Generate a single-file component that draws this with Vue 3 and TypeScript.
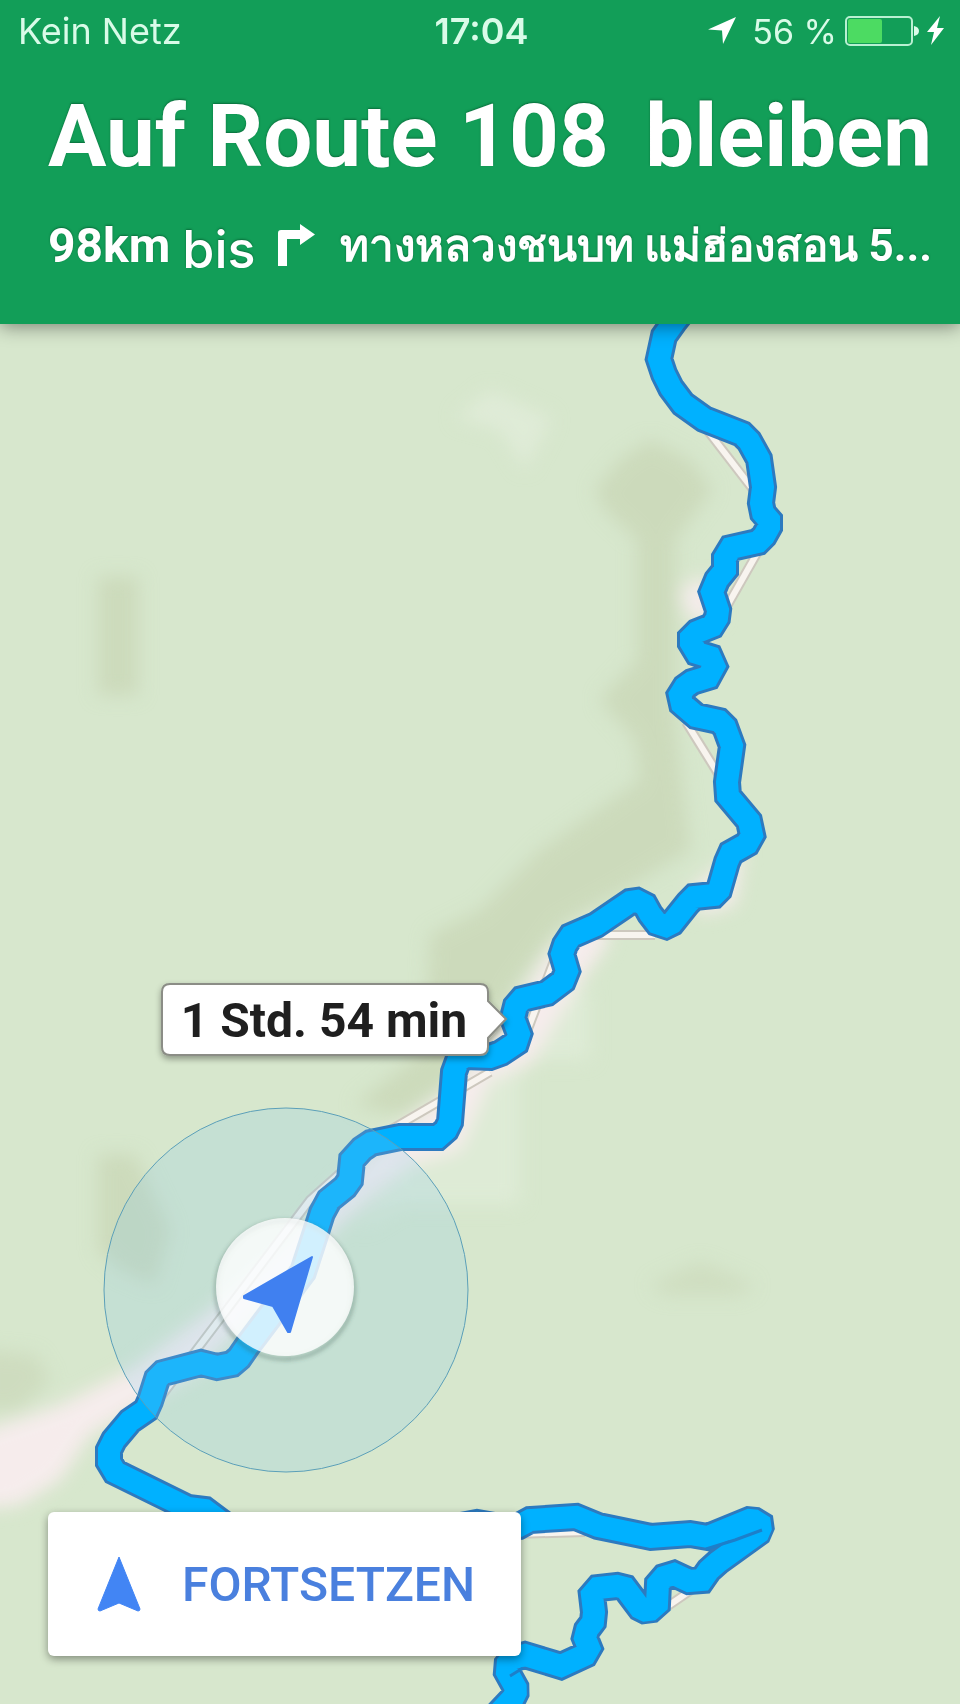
<script setup lang="ts">
interface Point {
  x: number
  y: number
}

const status = { carrier: 'Kein Netz', time: '17:04', battery: 56 }
const batteryFill = Math.round(status.battery * 0.61)

const parse = (source: string): Point[] =>
  source.split(' ').map((pair) => {
    const [x, y] = pair.split(',').map(Number)
    return { x, y }
  })

const toPath = (points: Point[]): string =>
  points.map((p, i) => `${i === 0 ? 'M' : 'L'}${p.x} ${p.y}`).join(' ')

const routePath = toPath(
  parse(
    '690,302 674,322 664,336 659,359 664,374 671,388 683,404 704,419 742,434 749,441 759,459 763,487 761,503 763,513 769,520 769,527 764,536 758,542 731,548 725,558 725,570 717,580 712,592 718,610 717,618 712,626 697,632 691,638 691,643 697,653 710,657 714,666 708,677 692,682 685,687 680,695 682,704 696,716 719,721 725,727 732,746 727,782 728,796 749,821 752,835 747,844 731,853 727,862 719,890 714,895 694,897 688,903 672,923 666,926 657,923 650,914 645,905 637,901 630,902 596,925 571,936 565,945 562,954 567,971 563,981 547,993 522,999 516,1006 513,1018 519,1034 516,1043 501,1053 490,1057 465,1056 458,1061 454,1072 450,1122 446,1130 438,1137 400,1137 371,1143 362,1149 352,1160 350,1180 345,1187 329,1200 322,1213 315,1235 303,1272 285,1296 248,1345 239,1358 232,1364 217,1367 201,1363 163,1373 157,1379 150,1401 146,1410 130,1421 114,1440 109,1450 109,1462 115,1472 188,1508 205,1510 225,1525 300,1550 440,1530 477,1523 500,1527 519,1526 530,1520 576,1517 598,1526 651,1537 690,1534 708,1537 752,1519 760,1524 761,1531 718,1562 709,1570 702,1580 689,1581 674,1574 664,1577 658,1584 657,1604 648,1612 640,1608 625,1588 617,1586 598,1588 592,1595 594,1612 593,1622 587,1630 585,1638 589,1648 585,1655 561,1666 525,1655 508,1660 507,1672 517,1690 513,1698 498,1714'
  )
)

const roads = [
  'M704 426 L758 496',
  'M760 548 L722 615',
  'M686 722 L722 780',
  'M590 935 L655 935',
  'M560 945 L520 1050',
  'M490 1072 L385 1133',
  'M385 1133 L310 1200 L160 1398',
  'M515 1534 L585 1532',
  'M668 1606 L700 1584',
]
</script>

<template>
  <main class="screen">
    <header class="header">
      <div class="status">
        <span class="carrier">{{ status.carrier }}</span>
        <time class="clock">{{ status.time }}</time>
        <div class="power">
          <svg class="location" viewBox="0 0 28 28" aria-hidden="true">
            <path d="M0 12.500 L28 0 L15 27 L14 13.500 Z" fill="#fff" />
          </svg>
          <span>{{ status.battery }} %</span>
          <svg class="battery" viewBox="0 0 100 30" aria-hidden="true">
            <rect x="1" y="1" width="66" height="28" rx="4" fill="none" stroke="#b9f0d2" stroke-width="2" />
            <rect x="3" y="3" :width="batteryFill" height="24" rx="2" fill="#4cdb62" />
            <path d="M69 10 Q74 11 74 15 Q74 19 69 20 Z" fill="#d9fbe8" />
            <path d="M95 0 L82 16 L89 16 L86 29 L99 12 L92 12 Z" fill="#fff" />
          </svg>
        </div>
      </div>
      <h1 class="title"><span>Auf Route 108</span><span>bleiben</span></h1>
      <div class="next">
        <strong>98km</strong>
        <span class="until">bis</span>
        <svg class="turn" viewBox="0 0 38 44" aria-label="Rechts abbiegen" role="img">
          <path d="M0 42 V9 Q0 6 3 6 H22 V0 L37 10.500 L22 21 V15 H9 V42 Z" fill="#fff" />
        </svg>
        <strong class="street"><span lang="th">ทางหลวงชนบท แม่ฮ่องสอน</span><span>5...</span></strong>
      </div>
    </header>

    <section class="map" aria-label="Karte">
      <svg class="canvas" viewBox="0 324 960 1380" preserveAspectRatio="xMidYMin slice">
        <defs>
          <filter id="soft" x="-30%" y="-30%" width="160%" height="160%">
            <feGaussianBlur stdDeviation="9" />
          </filter>
          <filter id="shade" x="-20%" y="-20%" width="140%" height="150%">
            <feDropShadow dx="0" dy="3" stdDeviation="3" flood-color="#000" flood-opacity="0.35" />
          </filter>
          <filter id="ring" x="-20%" y="-20%" width="140%" height="140%">
            <feGaussianBlur stdDeviation="2" />
          </filter>
        </defs>
        <rect y="324" width="960" height="1380" fill="#d7e7cd" />

        <g filter="url(#soft)">
          <g fill="#ccdabb">
            <path d="M595 490 L620 460 L650 440 L690 460 L712 490 L690 520 L675 540 L675 720 L690 850 L640 880 L560 925 L515 985 L480 1050 L440 1090 L400 1115 L355 1105 L425 1050 L430 935 L480 910 L540 850 L640 780 L635 740 L600 700 L637 660 L637 540 L605 510 Z" />
            <rect x="98" y="577" width="40" height="118" />
            <path d="M98 1155 H135 L170 1230 L155 1285 L120 1270 L98 1250 Z" />
            <path d="M650 1285 L700 1262 L755 1285 L740 1295 H665 Z" opacity="0.7" />
            <path d="M-20 1350 L35 1355 L50 1380 L20 1410 L-20 1410 Z" opacity="0.8" />
          </g>
          <path d="M455 418 L490 390 L552 418 L525 470 L500 430 Z" fill="#dfebd7" />
          <path d="M535 990 H590 V1060 H520 V1205 H400 L360 1230 L450 1100 Z" fill="#deebd6" />
          <g fill="#f6ecec">
            <path d="M-30 1435 L60 1405 L130 1370 L210 1310 L290 1240 L370 1150 L450 1090 L500 1030 L550 950 L600 915 L610 940 L575 990 L530 1065 L490 1080 L460 1150 L410 1165 L340 1225 L200 1370 L90 1435 L60 1480 L20 1505 L-30 1510 Z" />
            <path d="M680 590 L705 575 L720 620 L690 620 Z" />
            <path d="M715 870 L745 845 L735 905 L700 915 L690 890 Z" />
          </g>
        </g>

        <g fill="none">
          <path v-for="road in roads" :key="road" :d="road" stroke="#cdc8be" stroke-width="10" />
          <path v-for="road in roads" :key="road + 'top'" :d="road" stroke="#f8f4ef" stroke-width="6" />
        </g>

        <g fill="none" stroke-linejoin="miter" stroke-miterlimit="1.12">
          <path :d="routePath" stroke="#2d7abf" stroke-width="28" />
          <path :d="routePath" stroke="#00b1ff" stroke-width="22" />
          <path d="M706 1549 L735 1540 L762 1530 M510 1676 L523 1668" stroke="#1c7fca" stroke-width="3" />
        </g>

        <circle cx="286" cy="1290" r="182" fill="#85c5ee" fill-opacity="0.21" stroke="#5b9fb8" />
        <circle cx="285" cy="1290" r="69" fill="none" stroke="#3c5a50" stroke-opacity="0.45" stroke-width="3" filter="url(#ring)" />
        <circle cx="285" cy="1287" r="69" fill="#fff" fill-opacity="0.8" />
        <path d="M312 1257 L290 1332 L288 1332 L273 1306 L244 1298 L244 1296 Z" fill="#4080f0" stroke="#4080f0" stroke-width="2" stroke-linejoin="round" />

        <path
          d="M170 984 H480 Q488 984 488 992 V1001 L506 1019 L488 1038 V1047 Q488 1055 480 1055 H170 Q162 1055 162 1047 V992 Q162 984 170 984 Z"
          fill="#fff"
          stroke="#8b8d86"
          stroke-width="2"
          filter="url(#shade)"
        />
        <text class="eta" x="324" y="1037" text-anchor="middle">1 Std. 54 min</text>
      </svg>

      <button class="resume" type="button">
        <svg viewBox="0 0 46 58" aria-hidden="true">
          <path d="M23 2 L44 54 Q44 56 42 56 L23 48 L4 56 Q2 56 2 54 Z" fill="#4285f4" stroke="#4285f4" stroke-linejoin="round" />
        </svg>
        <span>FORTSETZEN</span>
      </button>
    </section>
  </main>
</template>

<style>
body {
  margin: 0;
}
</style>

<style scoped>
.screen {
  display: flex;
  flex-direction: column;
  min-height: 100vh;
  font-family: Roboto, "Noto Sans", sans-serif;
}

.header {
  position: relative;
  z-index: 1;
  padding-bottom: 46px;
  background: #129e58;
  color: #fff;
  box-shadow: 0 2px 18px rgba(0, 0, 0, 0.45);
}

.status {
  display: grid;
  grid-template-columns: 1fr auto 1fr;
  align-items: center;
  height: 62px;
  padding: 0 15px 0 18px;
  font-family: Inter, sans-serif;
  font-size: 36px;
  color: #d9fbe8;
}

.clock {
  font-weight: 600;
}

.power {
  display: flex;
  align-items: center;
  justify-content: flex-end;
  gap: 8px;
  font-size: 34px;
  white-space: nowrap;
}

.location {
  width: 28px;
  height: 28px;
  margin-right: 8px;
}

.battery {
  width: 100px;
  height: 30px;
}

.title {
  display: flex;
  justify-content: space-between;
  margin: 22px 28px 0 48px;
  font-size: 87px;
  font-weight: 700;
  line-height: 104px;
  white-space: nowrap;
  text-shadow: 0 -1px 2px rgba(0, 60, 30, 0.5);
}

.next {
  display: flex;
  align-items: center;
  margin: 26px 28px 0 48px;
  height: 64px;
  font-size: 48px;
  line-height: 64px;
  white-space: nowrap;
  text-shadow: 0 -1px 2px rgba(0, 60, 30, 0.5);
}

.until {
  padding-top: 8px;
  margin-left: 12px;
  font-family: Inter, sans-serif;
  font-size: 52px;
  font-weight: 500;
}

.turn {
  width: 38px;
  height: 44px;
  margin: 0 24px 0 22px;
}

.street {
  display: flex;
  flex: 1;
  align-items: baseline;
  justify-content: space-between;
  min-width: 0;
  font-size: 44px;
}

.map {
  position: relative;
  display: flex;
  flex: 1;
  align-items: flex-end;
  padding: 48px;
  background: #d7e7cd;
  overflow: hidden;
}

.canvas {
  position: absolute;
  inset: 0;
  width: 100%;
  height: 100%;
}

.eta {
  font-size: 48px;
  font-weight: 700;
  fill: #1f1f1f;
}

.resume {
  position: relative;
  display: flex;
  align-items: center;
  gap: 40px;
  height: 144px;
  padding: 0 46px 0 48px;
  border: 0;
  border-radius: 6px;
  background: #fff;
  color: #4a80de;
  font-family: inherit;
  font-size: 48px;
  font-weight: 500;
  box-shadow: 0 3px 8px rgba(0, 0, 0, 0.4);
}

.resume svg {
  width: 46px;
  height: 58px;
}
</style>
